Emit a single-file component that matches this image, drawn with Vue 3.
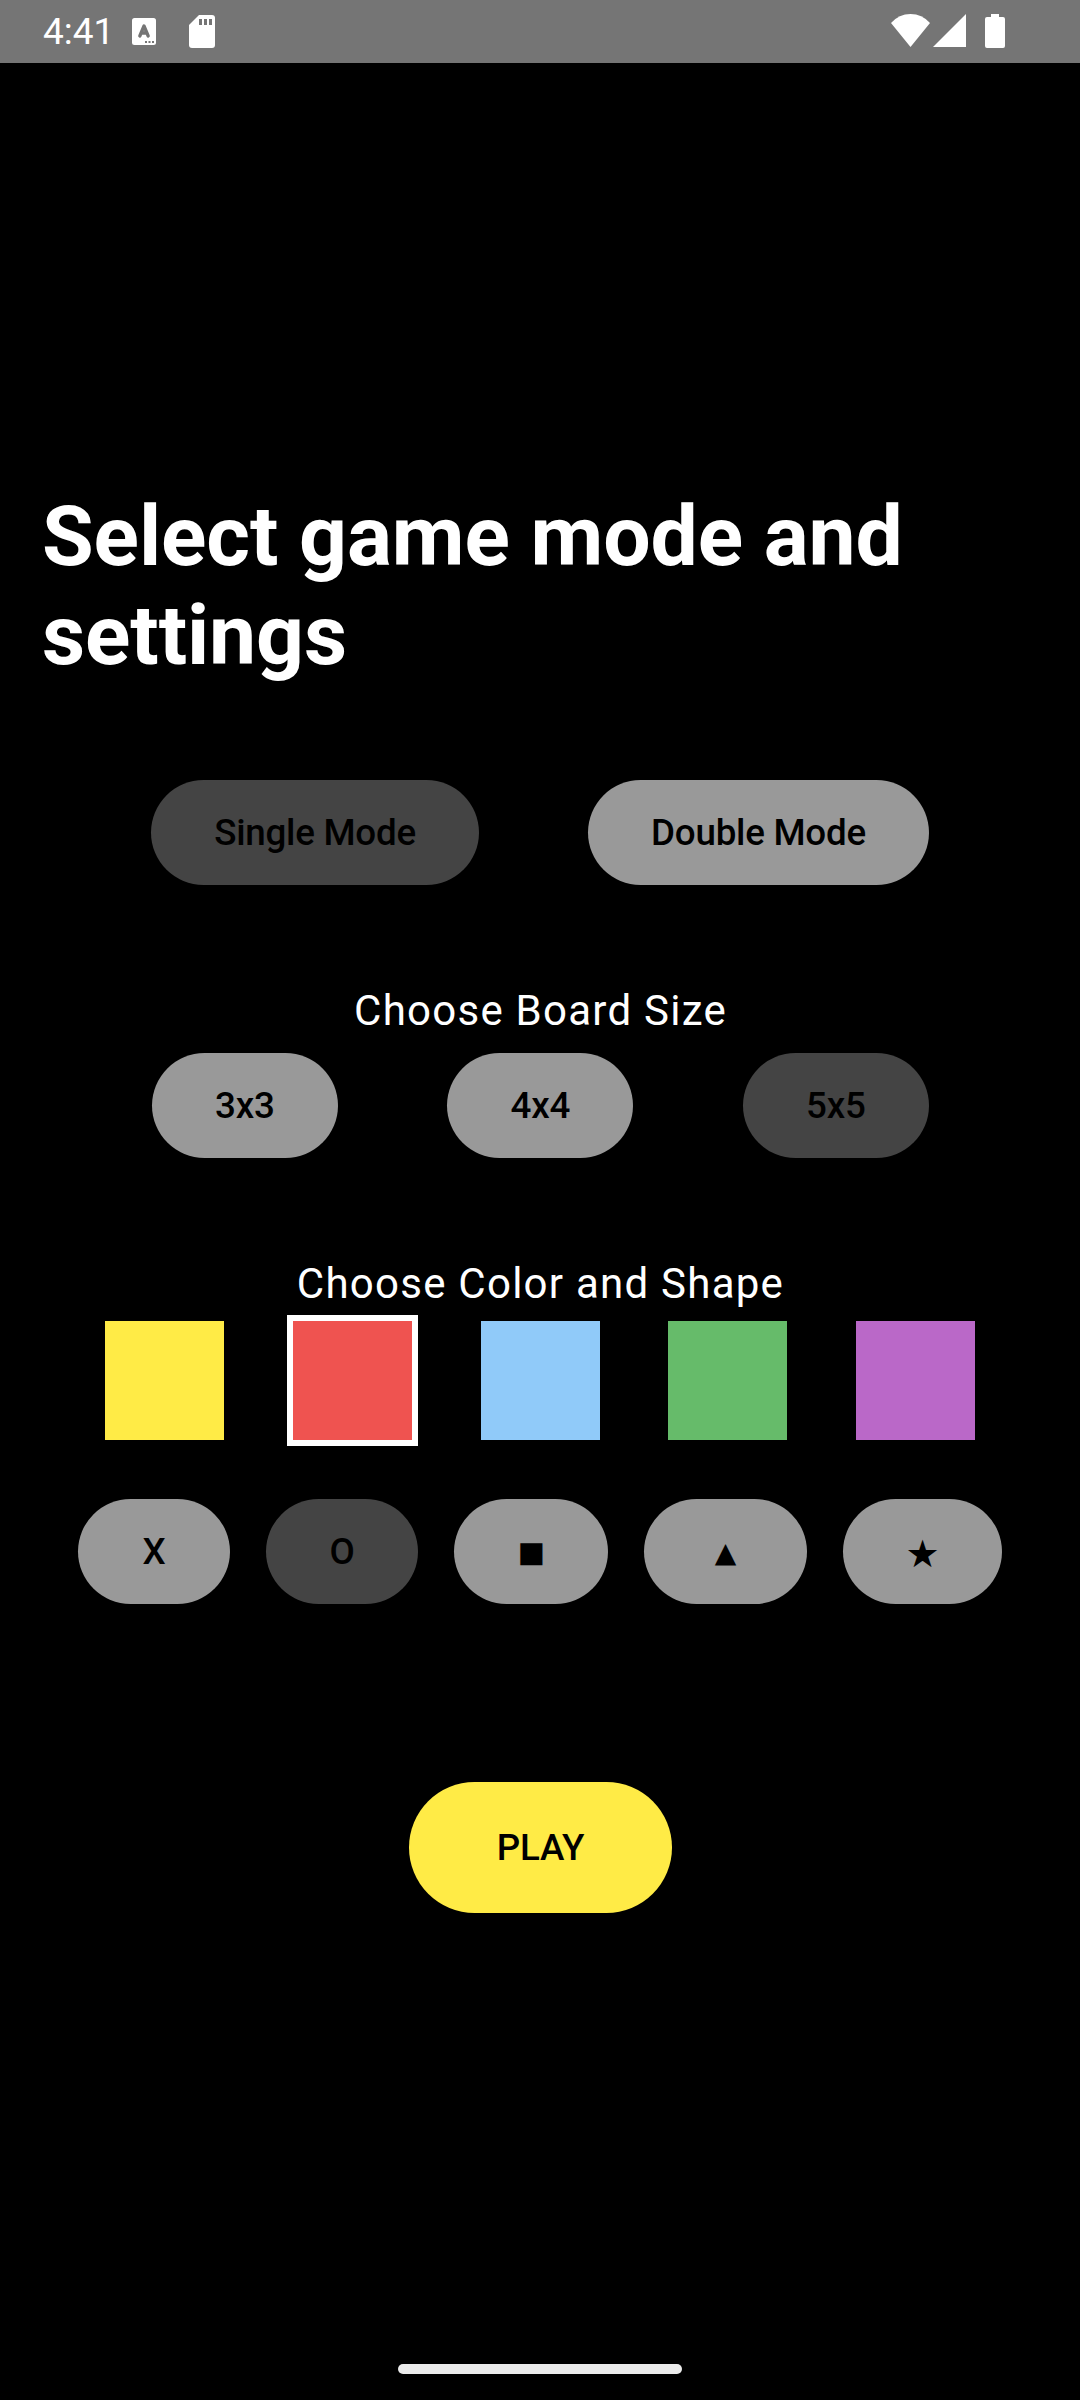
<script setup>
import { ref } from 'vue'

const mode = ref('single')
const size = ref('5x5')
const color = ref('red')
const shape = ref('circle')

const modes = [
  { id: 'single', label: 'Single Mode' },
  { id: 'double', label: 'Double Mode' },
]
const sizes = ['3x3', '4x4', '5x5']
const colors = ['yellow', 'red', 'blue', 'green', 'purple']
const shapes = [
  { id: 'cross', label: 'X' },
  { id: 'circle', label: 'O' },
  { id: 'square', label: '■' },
  { id: 'triangle', label: '▲' },
  { id: 'star', label: '★' },
]
</script>

<template>
  <div class="screen">
    <header class="status">
      <span class="clock">4:41</span>
      <svg class="ime" width="24" height="27" viewBox="0 0 24 27">
        <rect width="24" height="27" rx="2.5" fill="#fff" />
        <path d="M7.800 18 12 8 16.200 18M9 15h6" fill="none" stroke="#757575" stroke-width="3.3" stroke-linecap="round" stroke-linejoin="round" />
        <path d="M13 23h2v2h-2zM16.500 23h2v2h-2zM20 23h2v2h-2z" fill="#757575" />
      </svg>
      <svg class="sd" width="26" height="33" viewBox="0 0 26 33">
        <path d="M10 0H23a3 3 0 0 1 3 3V30a3 3 0 0 1-3 3H3a3 3 0 0 1-3-3V10z" fill="#fff" />
        <path d="M10 4h3v6h-3zM15 4h3v6h-3zM20 4h3v6h-3z" fill="#757575" />
      </svg>
      <span class="spacer"></span>
      <svg class="wifi" width="39" height="33" viewBox="0 0 39 33">
        <path d="M19.500 33 0 9Q8 0 19.500 0T39 9z" fill="#fff" />
      </svg>
      <svg class="signal" width="33" height="33" viewBox="0 0 33 33">
        <path d="M33 0V33H0z" fill="#fff" />
      </svg>
      <svg class="battery" width="20" height="34" viewBox="0 0 20 34">
        <path d="M6 0h8v3h4a2 2 0 0 1 2 2v27a2 2 0 0 1-2 2H2a2 2 0 0 1-2-2V5a2 2 0 0 1 2-2h4z" fill="#fff" />
      </svg>
    </header>

    <main class="content">
      <h1 class="title">Select game mode and settings</h1>

      <div class="row modes">
        <button
          v-for="m in modes"
          :key="m.id"
          class="pill"
          :class="[m.id, { chosen: mode === m.id }]"
          @click="mode = m.id"
        >{{ m.label }}</button>
      </div>

      <p class="label">Choose Board Size</p>
      <div class="row sizes">
        <button
          v-for="s in sizes"
          :key="s"
          class="pill"
          :class="{ chosen: size === s }"
          @click="size = s"
        >{{ s }}</button>
      </div>

      <p class="label">Choose Color and Shape</p>
      <div class="row swatches">
        <button
          v-for="c in colors"
          :key="c"
          class="swatch"
          :class="[c, { picked: color === c }]"
          :aria-label="c"
          @click="color = c"
        ></button>
      </div>
      <div class="row shapes">
        <button
          v-for="s in shapes"
          :key="s.id"
          class="pill"
          :class="[s.id, { chosen: shape === s.id }]"
          @click="shape = s.id"
        ><span class="glyph">{{ s.label }}</span></button>
      </div>

      <button class="play">PLAY</button>
    </main>

    <footer class="nav"><span class="handle"></span></footer>
  </div>
</template>

<style>
body {
  margin: 0;
  background: #000;
}
</style>

<style scoped>
.screen {
  width: 1080px;
  height: 2400px;
  display: flex;
  flex-direction: column;
  background: #000;
  color: #fff;
  font-family: Roboto, sans-serif;
  overflow: hidden;
}
.status {
  height: 63px;
  box-sizing: border-box;
  padding: 0 75px 0 43px;
  display: flex;
  align-items: flex-start;
  background: #757575;
}
.clock {
  width: 89px;
  font-size: 37px;
  line-height: 63px;
}
.ime {
  margin-top: 18px;
}
.sd {
  margin: 15px 0 0 33px;
}
.spacer {
  flex: 1;
}
.wifi {
  margin-top: 14px;
}
.signal {
  margin: 14px 0 0 3px;
}
.battery {
  margin: 14px 0 0 19px;
}
.content {
  flex: 1;
  display: flex;
  flex-direction: column;
  align-items: center;
}
.title {
  align-self: stretch;
  margin: 424px 100px 0 42px;
  font-size: 84px;
  line-height: 99px;
  letter-spacing: -0.1px;
  font-weight: 700;
}
.row {
  display: flex;
  justify-content: center;
}
button {
  border: 0;
  padding: 2px 0 0;
  font: 500 36.75px/1 Roboto, sans-serif;
  letter-spacing: -0.25px;
  color: #000;
}
.pill {
  width: 186px;
  height: 105px;
  border-radius: 53px;
  background: #999;
}
.pill.chosen {
  background: #444;
}
.modes {
  margin-top: 95px;
  gap: 109px;
}
.pill.single {
  width: 328px;
}
.pill.double {
  width: 341px;
}
.label {
  margin: 96px 0 0 1px;
  font-size: 42px;
  line-height: 60px;
  letter-spacing: 1.25px;
}
.sizes {
  margin: 12px 0 0 0.6px;
  gap: 109.5px;
}
.swatches {
  margin-top: 7px;
  gap: 68.750px;
}
.swatch {
  width: 119px;
  height: 119px;
}
.picked {
  box-shadow: 0 0 0 6px #fff;
}
.yellow { background: #ffeb46; }
.red { background: #ef5350; }
.blue { background: #90caf9; }
.green { background: #66bb6a; }
.purple { background: #ba68c8; }
.shapes {
  margin-top: 59px;
  gap: 36px;
}
.cross,
.circle {
  width: 152px;
}
.square {
  width: 154px;
}
.triangle {
  width: 163px;
}
.star {
  width: 159px;
}
.square,
.triangle {
  padding-bottom: 4px;
}
.star {
  padding-top: 6px;
}
.square .glyph,
.triangle .glyph,
.star .glyph {
  font-family: "DejaVu Sans", sans-serif;
  font-weight: 400;
  font-size: 29px;
}
.triangle .glyph {
  font-size: 28px;
}
.star .glyph {
  font-size: 38px;
}
.play {
  width: 263px;
  height: 131px;
  margin: 178px 0 0 1px;
  border-radius: 66px;
  background: #ffeb46;
}
.nav {
  height: 36px;
  display: flex;
  justify-content: center;
  align-items: flex-start;
}
.handle {
  width: 284px;
  height: 10px;
  border-radius: 5px;
  background: #ebebeb;
}
</style>
